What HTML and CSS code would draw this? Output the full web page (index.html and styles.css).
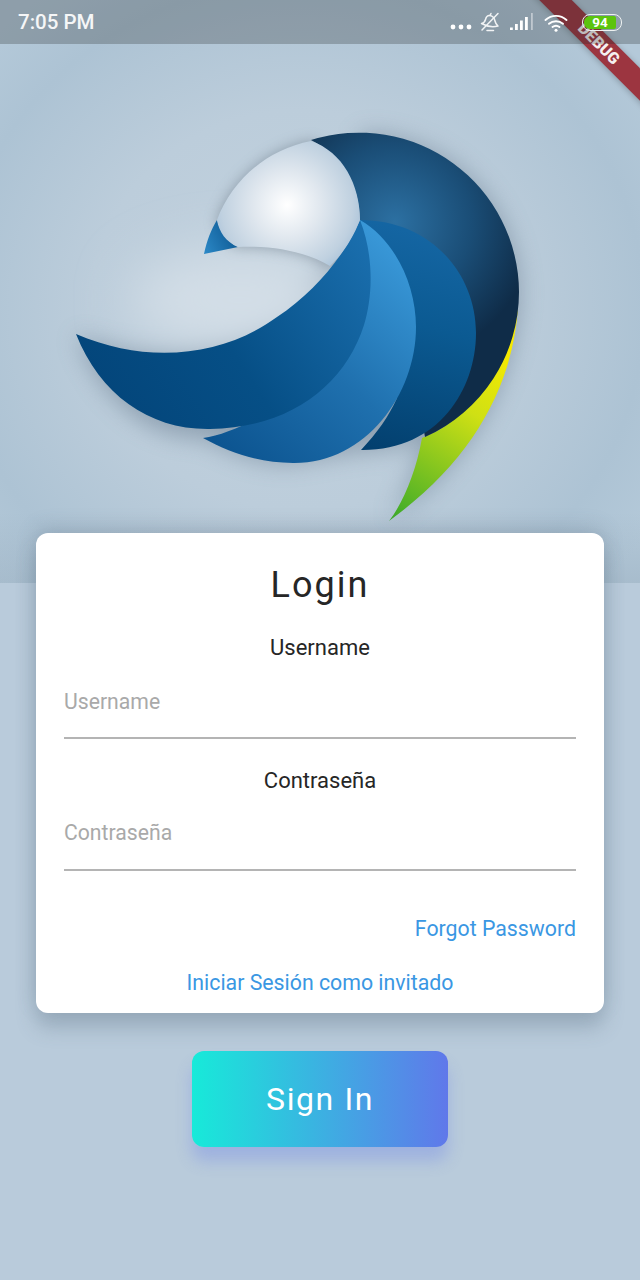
FILE: index.html
```html
<!DOCTYPE html>
<html lang="es">
<head>
<meta charset="utf-8">
<title>Login</title>
<link rel="stylesheet" href="styles.css">
</head>
<body>
<div class="screen">
  <header class="hero">
    <div class="status">
      <span class="time">7:05 PM</span>
      <div class="status-icons">
        <svg class="ico-dots" width="22" height="6" viewBox="0 0 22 6"><circle cx="3" cy="3" r="2.400"/><circle cx="11" cy="3" r="2.400"/><circle cx="19" cy="3" r="2.400"/></svg>
        <svg class="ico-bell" width="22" height="20" viewBox="0 0 22 20" fill="none" stroke="#f2f4f5" stroke-width="1.500" stroke-linecap="round" stroke-linejoin="round"><path d="M2.500 11.500C5 11 6 9.500 6.500 7.500 7.200 4.500 9 3.200 11 3.500c3 .5 4.500 3 5 5.500.4 2 1 3.500 3 5-5 1.600-11 .5-16.500-2.500z"/><path d="M8 18.500h6.500"/><path d="M11 3.500 12 1.500"/><path d="M3 18 19 1.500"/></svg>
        <svg class="ico-signal" width="24" height="18" viewBox="0 0 24 18"><rect x="0" y="14.500" width="2.800" height="2.500" fill="#fff"/><rect x="5" y="11" width="2.800" height="6" fill="#fff"/><rect x="10" y="7.500" width="2.800" height="9.500" fill="#fff"/><rect x="15" y="4" width="2.800" height="13" fill="#fff"/><rect x="21" y="0" width="1.800" height="17" fill="#fff" opacity=".45"/></svg>
        <svg class="ico-wifi" width="24" height="18" viewBox="0 0 24 18" fill="none" stroke="#fff" stroke-width="1.900" stroke-linecap="round"><path d="M1.500 6C7.500 .5 16.500 .5 22.500 6"/><path d="M5 9.800c4-3.500 10-3.500 14 0"/><path d="M8.500 13c2-1.500 5-1.500 7 0"/><circle cx="12" cy="16.200" r="1.500" fill="#fff" stroke="none"/></svg>
        <div class="battery"><span class="battery-fill">94</span></div>
      </div>
    </div>
    <svg class="logo" viewBox="0 44 640 539" width="640" height="539">
      <defs>
        <radialGradient id="sphere" gradientUnits="userSpaceOnUse" cx="395" cy="222" r="140">
          <stop offset="0" stop-color="#2c70a2"/>
          <stop offset=".55" stop-color="#1a4d76"/>
          <stop offset="1" stop-color="#0f2c48"/>
        </radialGradient>
        <radialGradient id="head" gradientUnits="userSpaceOnUse" cx="287" cy="205" r="82">
          <stop offset="0" stop-color="#ffffff"/>
          <stop offset=".4" stop-color="#e1e8ef"/>
          <stop offset=".8" stop-color="#c0d1e0"/>
          <stop offset="1" stop-color="#a4bfd8"/>
        </radialGradient>
        <linearGradient id="tail" gradientUnits="userSpaceOnUse" x1="505" y1="350" x2="395" y2="520">
          <stop offset="0" stop-color="#f6ea00"/>
          <stop offset=".35" stop-color="#cfe014"/>
          <stop offset="1" stop-color="#3cab2a"/>
        </linearGradient>
        <linearGradient id="beak" gradientUnits="userSpaceOnUse" x1="205" y1="250" x2="235" y2="235">
          <stop offset="0" stop-color="#2a86c4"/>
          <stop offset="1" stop-color="#0f5b95"/>
        </linearGradient>
        <linearGradient id="wing1" gradientUnits="userSpaceOnUse" x1="110" y1="420" x2="370" y2="250">
          <stop offset="0" stop-color="#03457a"/>
          <stop offset=".45" stop-color="#064f86"/>
          <stop offset="1" stop-color="#1a6ead"/>
        </linearGradient>
        <linearGradient id="wing2" gradientUnits="userSpaceOnUse" x1="230" y1="460" x2="410" y2="260">
          <stop offset="0" stop-color="#0c5490"/>
          <stop offset=".5" stop-color="#1f70ae"/>
          <stop offset="1" stop-color="#3998d8"/>
        </linearGradient>
        <linearGradient id="wing3" gradientUnits="userSpaceOnUse" x1="380" y1="450" x2="440" y2="240">
          <stop offset="0" stop-color="#03406f"/>
          <stop offset=".6" stop-color="#0b5a92"/>
          <stop offset="1" stop-color="#1465a2"/>
        </linearGradient>
        <filter id="soft" x="-20%" y="-20%" width="140%" height="140%"><feGaussianBlur stdDeviation="12"/></filter>
        <filter id="softer" x="-60%" y="-100%" width="220%" height="300%"><feGaussianBlur stdDeviation="26"/></filter>
        <filter id="tight" x="-30%" y="-30%" width="160%" height="160%"><feGaussianBlur stdDeviation="7"/></filter>
      </defs>
      <g fill="#4f6478" opacity=".42" filter="url(#soft)">
        <path d="M76 334C140 364 230 358 290 300C320 272 345 250 360 220L360 133A159 159 0 1 1 361 451L293 463C260 465 230 452 203 438C150 440 100 400 76 334Z"/>
        <path d="M518 310C510 390 470 460 389 521C405 495 418 470 422 440Z"/>
      </g>
      <ellipse cx="240" cy="300" rx="110" ry="50" fill="#d3dee7" filter="url(#softer)"/>
      <path d="M311 141C343 152 360 185 360 220C352 240 342 255 330 266C305 251 270 245 238 247C226 242 219 232 217 220C231 182 265 150 311 141Z" fill="#5d6b78" opacity=".5" filter="url(#tight)"/>
      <path d="M518 308C512 390 470 462 389 521C403 503 416 472 422 438C470 420 505 370 518 308Z" fill="url(#tail)"/>
      <path d="M311 140A160 160 0 0 1 519 292A159 159 0 0 1 425 437L400 300L360 220C360 185 340 155 311 140Z" fill="url(#sphere)"/>
      <path d="M360 220C431 220 476 274 476 333C476 390 438 451 361 450C377 433 389 416 397 398L360 220Z" fill="url(#wing3)"/>
      <path d="M360 220C395 240 416 285 416 327C416 395 365 464 293 463C260 463 230 453 203 438C255 430 340 375 365 280Z" fill="url(#wing2)"/>
      <path d="M360 220C375 258 372 300 364 325C345 385 290 428 210 429C150 430 100 395 76 334C150 366 225 355 277 317C315 292 345 255 360 220Z" fill="url(#wing1)"/>
      <path d="M217 220C221 234 229 243 238 247L204 254C207 240 211 230 217 220Z" fill="url(#beak)"/>
      <path d="M311 141C343 152 360 185 360 220C352 240 342 255 330 266C305 251 270 245 238 247C226 242 219 232 217 220C231 182 265 150 311 141Z" fill="url(#head)"/>
    </svg>
  </header>
  <main class="card">
    <h1 class="title">Login</h1>
    <div class="field">
      <div class="field-label">Username</div>
      <div class="input"><span class="placeholder">Username</span></div>
    </div>
    <div class="field">
      <div class="field-label">Contraseña</div>
      <div class="input"><span class="placeholder">Contraseña</span></div>
    </div>
    <a class="link link-forgot">Forgot Password</a>
    <a class="link link-guest">Iniciar Sesión como invitado</a>
  </main>
  <button class="signin">Sign In</button>
  <div class="debug"><span>DEBUG</span></div>
</div>
</body>
</html>
```
FILE: styles.css
```css
* { box-sizing: border-box; }
html, body { margin: 0; padding: 0; overflow: hidden; }
body { font-family: Roboto, "Liberation Sans", sans-serif; }
.screen {
  position: relative;
  width: 640px;
  height: 1280px;
  overflow: hidden;
  background: #b9cbdb;
  display: flex;
  flex-direction: column;
  align-items: center;
}
.hero {
  width: 640px;
  height: 583px;
  flex: none;
  background:
    linear-gradient(180deg, rgba(90, 110, 130, 0) 88%, rgba(90, 110, 130, .14) 100%),
    radial-gradient(ellipse 420px 400px at 300px 310px, #c3d2de 0%, #bccddb 50%, #adc3d4 82%, #b4c9d9 100%);
  background-color: #b4c9d9;
}
.status {
  position: relative;
  z-index: 3;
  height: 44px;
  background: rgba(40, 45, 45, .27);
  display: flex;
  align-items: center;
  justify-content: space-between;
  padding: 0 18px;
  color: #fff;
}
.time { font-size: 20.500px; font-weight: 500; color: #f5f6f7; }
.status-icons { display: flex; align-items: center; }
.ico-dots { fill: #fff; margin-top: 10px; margin-right: 7px; }
.ico-bell { margin-right: 9px; margin-top: -1px; }
.ico-signal { margin-right: 10px; margin-top: 0; }
.ico-wifi { margin-right: 14px; margin-top: 1px; }
.battery {
  width: 40px;
  height: 17px;
  border: 1.500px solid #eef2f2;
  border-radius: 8px;
  padding: 1px;
  display: flex;
  overflow: hidden;
}
.battery-fill {
  width: 32px;
  background: #5cc40e;
  border-radius: 6px 2px 2px 6px;
  color: #fff;
  font-size: 13.500px;
  font-weight: 700;
  line-height: 12px;
  text-align: center;
}
.logo { display: block; }
.card {
  flex: none;
  width: 568px;
  height: 480px;
  margin-top: -50px;
  background: #fff;
  border-radius: 12px;
  padding: 0 28px;
  box-shadow: 0 15px 20px rgba(80, 100, 120, .28), 0 -5px 20px rgba(80, 100, 120, .22);
  display: flex;
  flex-direction: column;
  position: relative;
}
.title {
  margin: 28px 0 0;
  font-size: 36px;
  line-height: 48px;
  font-weight: 400;
  letter-spacing: 2px;
  color: #262626;
  text-align: center;
}
.field { display: flex; flex-direction: column; }
.field-label {
  margin-top: 26px;
  font-size: 22px;
  line-height: 26px;
  color: #262626;
  text-align: center;
}
.field + .field .field-label { margin-top: 29px; }
.input {
  height: 78px;
  padding-top: 28px;
  border-bottom: 2px solid #b4b4b4;
}
.field + .field .input { height: 77px; padding-top: 26px; }
.placeholder { font-size: 21.200px; line-height: 26px; color: #a9a9a9; display: block; }
.link { color: #3a97e3; font-size: 21.300px; line-height: 26px; }
.link-forgot { margin-top: 45px; text-align: right; }
.link-guest { margin-top: 28px; text-align: center; }
.signin {
  flex: none;
  width: 256px;
  height: 96px;
  margin-top: 38px;
  border: 0;
  border-radius: 12px;
  background: linear-gradient(90deg, #17ead9, #6078ea);
  box-shadow: 0 14px 16px rgba(96, 120, 234, .3);
  color: #fff;
  font: 400 32px Roboto, sans-serif;
  letter-spacing: 1.600px;
  position: relative;
}
.debug {
  position: absolute;
  z-index: 2;
  left: 499px;
  top: 31.500px;
  width: 200px;
  height: 23px;
  background: #9c3540;
  transform: rotate(45deg);
  box-shadow: 0 1px 6px rgba(0, 0, 0, .25);
  color: #f5f0f0;
  font-size: 16px;
  font-weight: 900;
  line-height: 23px;
  text-align: center;
}
```
